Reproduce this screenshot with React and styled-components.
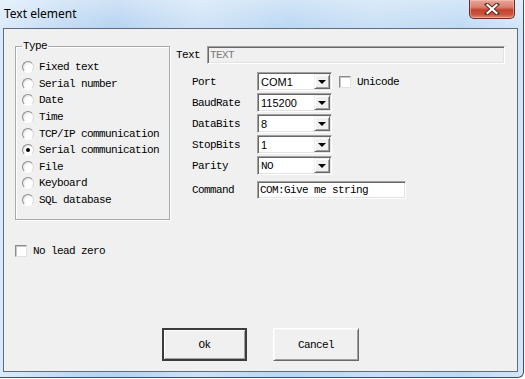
import styled, { createGlobalStyle } from 'styled-components'

const GlobalStyle = createGlobalStyle`
  html, body { margin: 0; padding: 0; background: #fff; }
  body { width: 525px; height: 379px; overflow: hidden; }
  * { box-sizing: border-box; }
`

const mono = `"Liberation Mono", "DejaVu Sans Mono", monospace`

const Window = styled.div`
  width: 524px;
  height: 378px;
  display: flex;
  flex-direction: column;
  padding: 0 5px 5px 3px;
  border-right: 1px solid #3f5066;
  border-bottom: 1px solid #3f5066;
  border-bottom-right-radius: 6px;
  background:
    linear-gradient(180deg, rgba(255,255,255,0.35) 0%, rgba(255,255,255,0) 30px),
    linear-gradient(90deg, #dbeafb 0%, #c3dbf4 12%, #b6d3f1 22%, #cde2f7 38%, #bad7f3 55%, #c8dff6 72%, #bedaf4 88%, #d3e6f9 100%);
`

const TitleBar = styled.div`
  height: 28px;
  flex: none;
  display: flex;
  align-items: flex-start;
  padding: 0 3px 0 1px;
`

const Title = styled.span`
  font-family: "Noto Sans", "Liberation Sans", sans-serif;
  font-size: 12px;
  line-height: 28px;
  color: #000;
`

const CloseButton = styled.div`
  margin-left: auto;
  width: 46px;
  height: 19px;
  display: flex;
  align-items: center;
  justify-content: center;
  border: 1px solid #6b2a24;
  border-top: none;
  border-radius: 0 0 5px 5px;
  background: linear-gradient(180deg, #e8a597 0%, #d8806f 40%, #c3432f 55%, #c9533f 80%, #dc8c6e 100%);
  box-shadow: inset 0 0 0 1px rgba(255, 210, 200, 0.45);
`

const Client = styled.div`
  flex: 1;
  display: flex;
  flex-direction: column;
  padding: 11px 11px 10px;
  border: 1px solid #5d6c7e;
  background: #f0f0f0;
  font-family: ${mono};
  font-size: 11px;
  letter-spacing: -0.6px;
  color: #000;
`

const TopSection = styled.div`
  display: flex;
  align-items: flex-start;
  gap: 6px;
`

const LeftColumn = styled.div`
  width: 155px;
  flex: none;
  display: flex;
  flex-direction: column;
`

const GroupBox = styled.fieldset`
  margin: 0;
  height: 180px;
  padding: 7px 6px 0;
  border: 1px solid #a9a9a9;
  box-shadow: 1px 1px 0 #fff, inset 1px 1px 0 #fff;
`

const Legend = styled.legend`
  margin-left: 0;
  padding: 0 1px;
  line-height: 12px;
`

const RadioItem = styled.div`
  height: 16.6px;
  display: flex;
  align-items: center;
  gap: 5px;
  white-space: nowrap;
`

const RadioCircle = styled.span`
  width: 12px;
  height: 12px;
  flex: none;
  border-radius: 50%;
  border: 1px solid;
  border-color: #8c8c8c #d8d8d8 #ffffff #8c8c8c;
  background: radial-gradient(circle at 65% 65%, #ffffff 0%, #ffffff 40%, #d4d4d4 100%);
  display: flex;
  align-items: center;
  justify-content: center;

  &::after {
    content: '';
    width: 4px;
    height: 4px;
    border-radius: 50%;
    background: ${p => (p.$checked ? '#000' : 'transparent')};
  }
`

const CheckRow = styled.label`
  display: flex;
  align-items: center;
  gap: 6px;
  height: 16px;
  margin-top: 23px;
`

const CheckBox = styled.span`
  width: 12px;
  height: 12px;
  flex: none;
  background: #fff;
  border: 1px solid;
  border-color: #8c8c8c #e2e2e2 #e2e2e2 #8c8c8c;
  box-shadow: inset 1px 1px 0 #c8c8c8;
`

const RightColumn = styled.div`
  flex: 1;
  margin-top: 6px;
  display: flex;
  flex-direction: column;
`

const TextRow = styled.div`
  display: flex;
  align-items: center;
  height: 18px;
`

const TextLabel = styled.span`
  width: 31px;
  flex: none;
`

const Sunken = styled.div`
  height: ${p => p.$h || 18}px;
  width: ${p => p.$w}px;
  flex: none;
  display: flex;
  align-items: center;
  padding-left: 2px;
  border: 1px solid;
  border-color: #a0a0a0 #ffffff #ffffff #a0a0a0;
  box-shadow: inset 1px 1px 0 #696969, inset -1px -1px 0 #e3e3e3;
  background: ${p => (p.$disabled ? '#f0f0f0' : '#fff')};
  color: ${p => (p.$disabled ? '#7a7a7a' : '#000')};
  white-space: nowrap;
  overflow: hidden;
`

const Fields = styled.div`
  margin-top: 8px;
  padding-left: 16px;
  display: flex;
  flex-direction: column;
  gap: 2px;
`

const FieldRow = styled.div`
  display: flex;
  align-items: center;
  height: ${p => p.$h || 19}px;
  margin-top: ${p => p.$gap || 0}px;
`

const FieldLabel = styled.span`
  width: 65px;
  flex: none;
`

const ComboValue = styled.span`
  flex: 1;
  padding-left: 1px;
  font-family: ${p => (p.$mono ? mono : `"Liberation Sans", Arial, sans-serif`)};
  font-size: 11px;
  letter-spacing: ${p => (p.$mono ? '-0.6px' : '0')};
`

const ArrowButton = styled.span`
  width: 16px;
  height: 15px;
  margin-right: 1px;
  flex: none;
  display: flex;
  align-items: center;
  justify-content: center;
  background: #f0f0f0;
  border: 1px solid;
  border-color: #f0f0f0 #696969 #696969 #f0f0f0;
  box-shadow: inset 1px 1px 0 #fff, inset -1px -1px 0 #a0a0a0;

  &::after {
    content: '';
    border-left: 4px solid transparent;
    border-right: 4px solid transparent;
    border-top: 4px solid #000;
    margin-top: 1px;
  }
`

const UnicodeCheck = styled.label`
  display: flex;
  align-items: center;
  gap: 6px;
  margin-left: 7px;
`

const ButtonRow = styled.div`
  margin-top: auto;
  display: flex;
  justify-content: center;
  gap: 26px;
`

const DialogButton = styled.button`
  width: ${p => p.$w}px;
  height: 33px;
  padding: 0;
  font-family: ${mono};
  font-size: 11px;
  letter-spacing: -0.6px;
  color: #000;
  background: #f0f0f0;
  border: 1px solid;
  border-color: ${p => (p.$default ? '#3c3c3c' : '#ffffff #696969 #696969 #ffffff')};
  box-shadow: ${p =>
    p.$default
      ? 'inset 1px 1px 0 #3c3c3c, inset -1px -1px 0 #3c3c3c, inset 2px 2px 0 #fff, inset -2px -2px 0 #a0a0a0'
      : 'inset 1px 1px 0 #f8f8f8, inset -1px -1px 0 #a0a0a0'};
`

const types = [
  'Fixed text',
  'Serial number',
  'Date',
  'Time',
  'TCP/IP communication',
  'Serial communication',
  'File',
  'Keyboard',
  'SQL database',
]

const combos = [
  { label: 'Port', value: 'COM1', unicode: true },
  { label: 'BaudRate', value: '115200' },
  { label: 'DataBits', value: '8' },
  { label: 'StopBits', value: '1' },
  { label: 'Parity', value: 'NO', mono: true },
]

const Combo = ({ value, mono: isMono }) => (
  <Sunken $w={75} $h={19}>
    <ComboValue $mono={isMono}>{value}</ComboValue>
    <ArrowButton />
  </Sunken>
)

export default function App() {
  return (
    <>
      <GlobalStyle />
      <Window>
        <TitleBar>
          <Title>Text element</Title>
          <CloseButton>
            <svg width="16" height="12" viewBox="0 0 16 12">
              <path d="M3 1.5 L13 10.5 M13 1.5 L3 10.5" stroke="#5a2a22" strokeWidth="4" strokeLinecap="square" />
              <path d="M3.5 2 L12.5 10 M12.5 2 L3.5 10" stroke="#fff" strokeWidth="2.2" strokeLinecap="square" />
            </svg>
          </CloseButton>
        </TitleBar>
        <Client>
          <TopSection>
            <LeftColumn>
              <GroupBox>
                <Legend>Type</Legend>
                {types.map(t => (
                  <RadioItem key={t}>
                    <RadioCircle $checked={t === 'Serial communication'} />
                    {t}
                  </RadioItem>
                ))}
              </GroupBox>
              <CheckRow>
                <CheckBox />
                No lead zero
              </CheckRow>
            </LeftColumn>
            <RightColumn>
              <TextRow>
                <TextLabel>Text</TextLabel>
                <Sunken $w={298} $disabled>TEXT</Sunken>
              </TextRow>
              <Fields>
                {combos.map(c => (
                  <FieldRow key={c.label}>
                    <FieldLabel>{c.label}</FieldLabel>
                    <Combo value={c.value} mono={c.mono} />
                    {c.unicode && (
                      <UnicodeCheck>
                        <CheckBox />
                        Unicode
                      </UnicodeCheck>
                    )}
                  </FieldRow>
                ))}
                <FieldRow $h={18} $gap={4}>
                  <FieldLabel>Command</FieldLabel>
                  <Sunken $w={149}>COM:Give me string</Sunken>
                </FieldRow>
              </Fields>
            </RightColumn>
          </TopSection>
          <ButtonRow>
            <DialogButton $w={85} $default>Ok</DialogButton>
            <DialogButton $w={86}>Cancel</DialogButton>
          </ButtonRow>
        </Client>
      </Window>
    </>
  )
}
